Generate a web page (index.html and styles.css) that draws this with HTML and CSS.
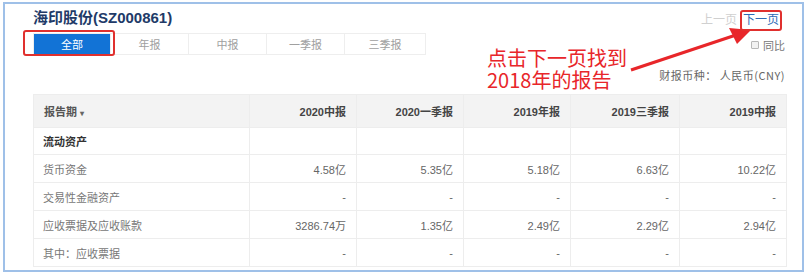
FILE: index.html
```html
<!DOCTYPE html>
<html>
<head>
<meta charset="utf-8">
<link rel="stylesheet" href="styles.css">
</head>
<body>
<div class="frame">
  <div class="toprow">
    <div class="title">海印股份(SZ000861)</div>
    <div class="pager">
      <span class="prev">上一页</span>
      <span class="next">下一页</span>
    </div>
  </div>
  <div class="tabrow">
    <div class="tabs">
      <div class="tab active">全部</div>
      <div class="tab">年报</div>
      <div class="tab">中报</div>
      <div class="tab">一季报</div>
      <div class="tab">三季报</div>
    </div>
    <label class="yoy"><span class="box"></span>同比</label>
  </div>
  <div class="currency">财报币种：&nbsp;人民币(CNY)</div>
  <table class="fin">
    <colgroup>
      <col class="c0"><col class="c1"><col class="c1"><col class="c1"><col class="c2"><col class="c1">
    </colgroup>
    <thead>
      <tr><th class="lbl">报告期 <span class="caret">▾</span></th><th>2020中报</th><th>2020一季报</th><th>2019年报</th><th>2019三季报</th><th>2019中报</th></tr>
    </thead>
    <tbody>
      <tr class="sect"><td>流动资产</td><td></td><td></td><td></td><td></td><td></td></tr>
      <tr><td>货币资金</td><td>4.58亿</td><td>5.35亿</td><td>5.18亿</td><td>6.63亿</td><td>10.22亿</td></tr>
      <tr><td>交易性金融资产</td><td>-</td><td>-</td><td>-</td><td>-</td><td>-</td></tr>
      <tr><td>应收票据及应收账款</td><td>3286.74万</td><td>1.35亿</td><td>2.49亿</td><td>2.29亿</td><td>2.94亿</td></tr>
      <tr><td>其中：应收票据</td><td>-</td><td>-</td><td>-</td><td>-</td><td>-</td></tr>
    </tbody>
  </table>

  <div class="note"><div class="nl">点击下一页找到</div><div class="nl">2018年的报告</div></div>
  <svg class="arrow" width="140" height="60" viewBox="0 0 140 60">
    <line x1="6" y1="48" x2="114" y2="12" stroke="#e8262a" stroke-width="3"/>
    <polygon points="126,8 104,6 112,22" fill="#e8262a"/>
  </svg>
  <div class="mark mark-all"></div>
  <div class="mark mark-next"></div>
</div>
</body>
</html>
```

FILE: styles.css
```css
* { box-sizing: border-box; }
html, body { margin: 0; padding: 0; background: #fff; }
body { font-family: "Liberation Sans", "Noto Sans CJK SC", Arial, sans-serif; }

.frame {
  position: relative;
  margin: 2px 0 0 3px;
  width: 801px;
  height: 270px;
  border: 2px solid #9fc0e8;
  overflow: hidden;
  padding: 0 15px 0 28px;
}

.toprow {
  display: flex;
  justify-content: space-between;
  align-items: flex-end;
  height: 26px;
}
.title {
  font-size: 15px;
  font-weight: bold;
  color: #213a68;
  line-height: 20px;
  padding-bottom: 2px;
}
.pager {
  display: flex;
  gap: 6px;
  font-size: 12px;
  line-height: 16px;
  padding-bottom: 2px;
  margin-right: 8px;
}
.prev { color: #d0d0d0; }
.next { color: #2d6bb5; }

.tabrow {
  display: flex;
  justify-content: space-between;
  align-items: flex-start;
  margin-top: 3px;
  height: 35px;
}
.tabs {
  display: flex;
  border: 1px solid #eeeeee;
}
.tab {
  width: 78px;
  height: 20px;
  line-height: 20px;
  text-align: center;
  font-size: 11px;
  color: #a0a0a0;
  border-right: 1px solid #eeeeee;
  font-family: "Noto Sans CJK SC", sans-serif;
}
.tab:last-child { border-right: none; width: 80px; }
.tab.active {
  background: #1273d6;
  color: #fff;
  width: 77px;
}
.yoy {
  display: flex;
  align-items: center;
  gap: 4px;
  font-size: 11px;
  color: #777;
  margin-top: 4px;
  margin-right: 2px;
  font-family: "Noto Sans CJK SC", sans-serif;
}
.box {
  width: 8px;
  height: 8px;
  border: 1px solid #b8b8b8;
  background: #f2f2f2;
  border-radius: 1px;
}

.currency {
  text-align: right;
  font-size: 11px;
  color: #666;
  line-height: 14px;
  margin-right: 2px;
  letter-spacing: 0.5px;
  font-family: "Noto Sans CJK SC", sans-serif;
}

.fin {
  margin-top: 12px;
  width: 753px;
  border-collapse: collapse;
  font-size: 11px;
  table-layout: fixed;
}
.c0 { width: 216px; }
.c1 { width: 107px; }
.c2 { width: 109px; }
.fin th, .fin td {
  border: 1px solid #ededed;
  text-align: right;
  padding: 0 10px;
}
.fin th {
  background: #f3f3f3;
  height: 33px;
  color: #444;
  font-weight: bold;
}
.fin th.lbl { text-align: left; color: #555; font-weight: bold; padding-left: 10px; }
.caret { font-size: 8px; color: #666; }
.fin td {
  height: 28px;
  color: #666;
}
.fin td:first-child {
  text-align: left;
  color: #777;
  padding-left: 9px;
}
.fin tr.sect td { height: 27px; }
.fin tr.sect td:first-child { color: #333; font-weight: bold; }

.note {
  position: absolute;
  left: 482px;
  top: 43px;
  color: #e8262a;
  font-family: "Noto Sans CJK SC", sans-serif;
  font-size: 20px;
}
.nl {
  height: 22px;
  line-height: 22px;
  overflow: visible;
}
.arrow {
  position: absolute;
  left: 620px;
  top: 18px;
}
.mark {
  position: absolute;
  border: 2px solid #e0302e;
  border-radius: 3px;
}
.mark-all { left: 18px; top: 26px; width: 92px; height: 26px; }
.mark-next { left: 735px; top: 6px; width: 42px; height: 21px; }
```
